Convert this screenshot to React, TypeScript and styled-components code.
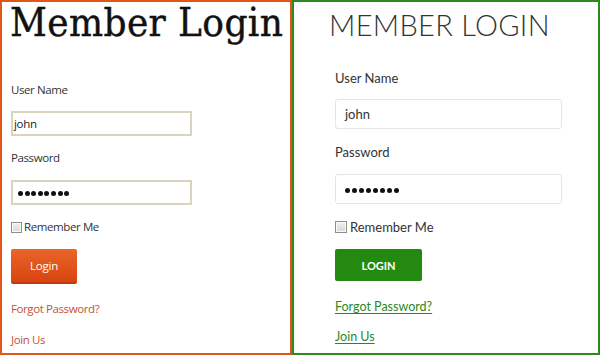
import React from "react";
import styled, { createGlobalStyle } from "styled-components";

const Global = createGlobalStyle`
  html, body { margin: 0; padding: 0; background: #fff; }
  body { width: 600px; height: 355px; overflow: hidden; }
`;

const Page = styled.div`
  display: flex;
  width: 600px;
  height: 355px;
`;

const Panel = styled.div<{ $border: string; $w: number; $pl: number }>`
  box-sizing: border-box;
  width: ${(p) => p.$w}px;
  height: 355px;
  border: 2px solid ${(p) => p.$border};
  padding-left: ${(p) => p.$pl}px;
  display: flex;
  flex-direction: column;
  align-items: flex-start;
`;

const Block = styled.div<{ $mt: number }>`
  margin-top: ${(p) => p.$mt}px;
`;

/* left (classic) */
const ClassicTitle = styled.h1`
  margin: 0 0 0 -1px;
  font-family: "DejaVu Serif Condensed", "DejaVu Serif", serif;
  font-stretch: condensed;
  font-weight: 400;
  font-size: 40px;
  line-height: 40px;
  letter-spacing: 0.4px;
  color: #111;
  white-space: nowrap;
  -webkit-text-stroke: 0.4px #111;
`;

const ClassicLabel = styled.div`
  font-family: "Open Sans", sans-serif;
  font-size: 11.5px;
  letter-spacing: -0.4px;
  line-height: 16px;
  color: #333;
`;

const ClassicInput = styled.div`
  box-sizing: border-box;
  width: 181px;
  height: 25px;
  border: 2px solid #d9d4bd;
  background: #fff;
  padding-left: 1px;
  font-family: "Open Sans", sans-serif;
  font-size: 11.5px;
  letter-spacing: -0.3px;
  line-height: 21px;
  color: #222;
`;

const Dots = styled.span<{ $size: number; $gap: number; $ml: number }>`
  display: inline-flex;
  gap: ${(p) => p.$gap}px;
  margin-left: ${(p) => p.$ml}px;
  vertical-align: middle;
  & > i {
    display: block;
    width: ${(p) => p.$size}px;
    height: ${(p) => p.$size}px;
    border-radius: 50%;
    background: #111;
  }
`;

const CheckRow = styled.label<{ $font: string; $size: number; $gap: number; $ls: number }>`
  display: flex;
  align-items: center;
  gap: ${(p) => p.$gap}px;
  font-family: ${(p) => p.$font};
  font-size: ${(p) => p.$size}px;
  letter-spacing: ${(p) => p.$ls}px;
  line-height: 16px;
  color: #333;
`;

const Box = styled.span<{ $s: number }>`
  box-sizing: border-box;
  display: block;
  width: ${(p) => p.$s}px;
  height: ${(p) => p.$s}px;
  border: 1px solid #8e8e8e;
  background: linear-gradient(#f2f2f2, #d6d6d6);
  box-shadow: inset 0 0 0 1px #fafafa;
`;

const ClassicButton = styled.button`
  box-sizing: border-box;
  width: 66px;
  height: 35px;
  border: 0;
  border-radius: 2px;
  background: linear-gradient(#e9652a, #d9440f);
  border-bottom: 2px solid #c23a0c;
  color: #fff;
  font-family: "Open Sans", sans-serif;
  font-size: 11.5px;
  letter-spacing: -0.2px;
  padding: 0;
`;

const ClassicLink = styled.a`
  font-family: "Open Sans", sans-serif;
  font-size: 11.5px;
  letter-spacing: -0.4px;
  line-height: 16px;
  color: #c75131;
  text-decoration: none;
`;

/* right (modern) */
const ModernTitle = styled.h1`
  margin: 0;
  font-family: Lato, sans-serif;
  font-weight: 300;
  font-size: 29px;
  letter-spacing: 0.3px;
  line-height: 32px;
  color: #333;
  white-space: nowrap;
  margin-left: -6px;
`;

const ModernLabel = styled.div`
  font-family: Lato, sans-serif;
  font-size: 13px;
  line-height: 16px;
  color: #333;
`;

const ModernInput = styled.div`
  box-sizing: border-box;
  width: 227px;
  height: 30px;
  border: 1px solid #e5e5e5;
  border-radius: 3px;
  background: #fff;
  padding-left: 9px;
  font-family: Lato, sans-serif;
  font-size: 13px;
  line-height: 28px;
  color: #333;
`;

const ModernButton = styled.button`
  box-sizing: border-box;
  width: 87px;
  height: 32px;
  border: 0;
  border-radius: 2px;
  background: #238a0f;
  color: #fff;
  font-family: Lato, sans-serif;
  font-weight: 700;
  font-size: 11px;
  padding: 0;
`;

const ModernLink = styled.a`
  font-family: Lato, sans-serif;
  font-size: 12.5px;
  line-height: 16px;
  color: #2b8a1f;
  text-decoration: underline;
  text-underline-offset: 2px;
`;

const dots = (n: number) => Array.from({ length: n }, (_, i) => <i key={i} />);

export default function App() {
  return (
    <>
      <Global />
      <Page>
        <Panel $border="#e3561a" $w={292} $pl={9}>
          <ClassicTitle>Member Login</ClassicTitle>
          <Block $mt={40}>
            <ClassicLabel>User Name</ClassicLabel>
          </Block>
          <Block $mt={13}>
            <ClassicInput>john</ClassicInput>
          </Block>
          <Block $mt={14}>
            <ClassicLabel>Password</ClassicLabel>
          </Block>
          <Block $mt={14}>
            <ClassicInput>
              <Dots $size={5} $gap={1.6} $ml={4}>{dots(8)}</Dots>
            </ClassicInput>
          </Block>
          <Block $mt={14}>
            <CheckRow $font={'"Open Sans", sans-serif'} $size={11.5} $gap={2} $ls={-0.4}>
              <Box $s={11} />
              Remember Me
            </CheckRow>
          </Block>
          <Block $mt={14}>
            <ClassicButton>Login</ClassicButton>
          </Block>
          <Block $mt={15}>
            <ClassicLink href="#">Forgot Password?</ClassicLink>
          </Block>
          <Block $mt={13}>
            <ClassicLink href="#">Join Us</ClassicLink>
          </Block>
        </Panel>
        <Panel $border="#2c8a1c" $w={308} $pl={41}>
          <Block $mt={7}>
            <ModernTitle>MEMBER LOGIN</ModernTitle>
          </Block>
          <Block $mt={29}>
            <ModernLabel>User Name</ModernLabel>
          </Block>
          <Block $mt={13}>
            <ModernInput>john</ModernInput>
          </Block>
          <Block $mt={15}>
            <ModernLabel>Password</ModernLabel>
          </Block>
          <Block $mt={14}>
            <ModernInput>
              <Dots $size={5} $gap={2} $ml={0}>{dots(8)}</Dots>
            </ModernInput>
          </Block>
          <Block $mt={15}>
            <CheckRow $font={"Lato, sans-serif"} $size={13} $gap={3} $ls={0}>
              <Box $s={12} />
              Remember Me
            </CheckRow>
          </Block>
          <Block $mt={14}>
            <ModernButton>LOGIN</ModernButton>
          </Block>
          <Block $mt={16}>
            <ModernLink href="#">Forgot Password?</ModernLink>
          </Block>
          <Block $mt={12}>
            <ModernLink href="#">Join Us</ModernLink>
          </Block>
        </Panel>
      </Page>
    </>
  );
}
